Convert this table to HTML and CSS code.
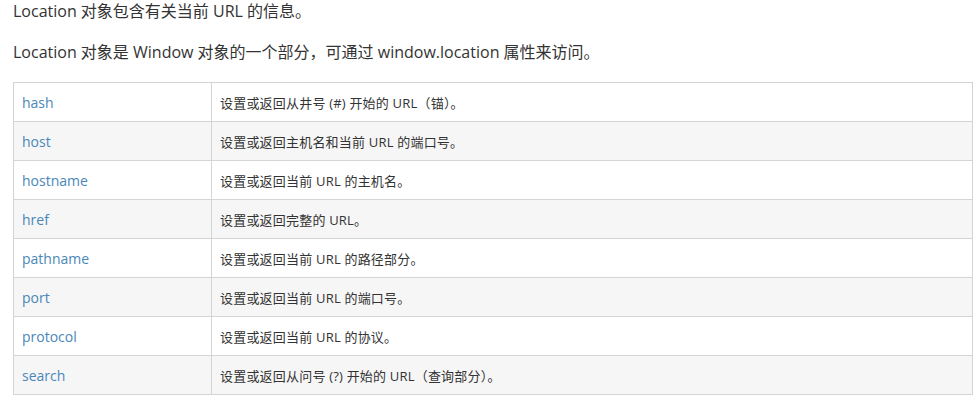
FILE: index.html
```html
<!DOCTYPE html>
<html>
<head>
<meta charset="utf-8">
<link rel="stylesheet" href="styles.css">
</head>
<body>
<p class="intro">Location 对象包含有关当前 URL 的信息。</p>
<p class="intro">Location 对象是 Window 对象的一个部分，可通过 window.location 属性来访问。</p>
<table class="ref">
<tr><td class="name"><a href="#">hash</a></td><td class="desc">设置或返回从井号 (#) 开始的 URL（锚）。</td></tr>
<tr><td class="name"><a href="#">host</a></td><td class="desc">设置或返回主机名和当前 URL 的端口号。</td></tr>
<tr><td class="name"><a href="#">hostname</a></td><td class="desc">设置或返回当前 URL 的主机名。</td></tr>
<tr><td class="name"><a href="#">href</a></td><td class="desc">设置或返回完整的 URL。</td></tr>
<tr><td class="name"><a href="#">pathname</a></td><td class="desc">设置或返回当前 URL 的路径部分。</td></tr>
<tr><td class="name"><a href="#">port</a></td><td class="desc">设置或返回当前 URL 的端口号。</td></tr>
<tr><td class="name"><a href="#">protocol</a></td><td class="desc">设置或返回当前 URL 的协议。</td></tr>
<tr><td class="name"><a href="#">search</a></td><td class="desc">设置或返回从问号 (?) 开始的 URL（查询部分）。</td></tr>
</table>
</body>
</html>
```
FILE: styles.css
```css
html, body {
  margin: 0;
  padding: 0;
  background: #fff;
}
body {
  padding: 0 6px 0 13px;
  font-family: "Open Sans", "Noto Sans CJK SC", sans-serif;
  color: #333;
}
.intro {
  margin: 0 0 17px;
  font-size: 16px;
  line-height: 24px;
  position: relative;
  top: -1px;
}
.ref {
  width: 960px;
  border-collapse: collapse;
  border: 1px solid #d4d4d4;
}
.ref td {
  border: 1px solid #d4d4d4;
  height: 39px;
  padding: 0 8px;
  box-sizing: border-box;
  vertical-align: middle;
}
.ref tr:nth-child(even) td {
  background: #f6f6f6;
}
.ref .name {
  width: 198px;
  font-size: 14px;
}
.ref .name a {
  color: #4a87b9;
  text-decoration: none;
}
.ref .desc {
  font-size: 13px;
  letter-spacing: 0.2px;
  color: #333;
}
```
